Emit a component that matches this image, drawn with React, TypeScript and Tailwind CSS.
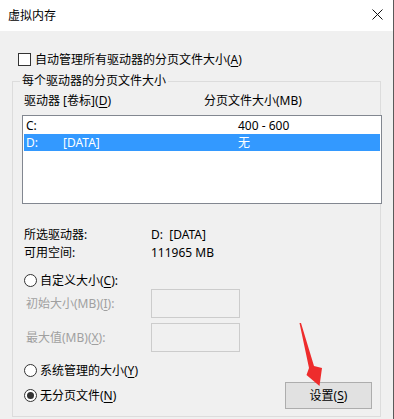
import React from 'react'

const U = ({ children }: { children: React.ReactNode }) => <span className="underline underline-offset-2">{children}</span>

const Radio = ({ checked }: { checked?: boolean }) => (
  <span className="w-[13px] h-[13px] rounded-full border border-[#333333] bg-white flex items-center justify-center shrink-0">
    {checked && <span className="w-[7px] h-[7px] rounded-full bg-[#333333]" />}
  </span>
)

const SizeInput = ({ label, mnemonic, mt }: { label: string; mnemonic: string; mt: string }) => (
  <div className={`flex items-center h-[29px] ${mt}`}>
    <span className="w-[129px] pl-[4px] text-[#a0a0a0]">
      {label}(<U>{mnemonic}</U>):
    </span>
    <div className="w-[89px] h-[29px] border border-[#cccccc] bg-[#f0f0f0]" />
  </div>
)

export default function App() {
  return (
    <div className="relative w-[394px] h-[419px] overflow-hidden bg-[#f0f0f0] border-r border-[#5a5a5a] text-[12px] leading-[17px] text-black font-['Noto_Sans','Noto_Sans_CJK_SC',sans-serif]">
      <div className="h-[31px] bg-white flex items-center justify-between pl-[8px] pr-[10px]">
        <span>虚拟内存</span>
        <svg width="11" height="11" viewBox="0 0 11 11" className="mt-[-2px]">
          <path d="M0.5 0.5L10.5 10.5M10.5 0.5L0.5 10.5" stroke="#111" strokeWidth="1" />
        </svg>
      </div>

      <div className="px-[12px]">
        <div className="flex items-center h-[14px] mt-[21px] pl-[6px] gap-[4px]">
          <span className="w-[13px] h-[13px] border border-[#333333] bg-white shrink-0" />
          <span>
            自动管理所有驱动器的分页文件大小(<U>A</U>)
          </span>
        </div>

        <fieldset className="mt-[7px] border border-[#dcdcdc] pl-[9px] pr-[8px] pt-[4px] pb-[7px]">
          <legend className="px-[2px] ml-[-2px] leading-[16px]">每个驱动器的分页文件大小</legend>

          <div className="flex pl-[2px] leading-[16px]">
            <span className="w-[180px]">
              驱动器 [卷标](<U>D</U>)
            </span>
            <span>分页文件大小(MB)</span>
          </div>

          <div className="mt-[6px] mr-[-10px] h-[89px] border border-[#828790] bg-white p-[1px]">
            <div className="flex items-center h-[17px] pl-[2px]">
              <span className="w-[37px]">C:</span>
              <span className="w-[175px]"></span>
              <span>400 - 600</span>
            </div>
            <div className="flex items-center h-[17px] pl-[2px] bg-[#3399ff] text-white">
              <span className="w-[37px]">D:</span>
              <span className="w-[175px]">[DATA]</span>
              <span>无</span>
            </div>
          </div>

          <div className="mt-[22px] pl-[2px] leading-[18px]">
            <div className="flex">
              <span className="w-[127px]">所选驱动器:</span>
              <span>D:&nbsp;&nbsp;[DATA]</span>
            </div>
            <div className="flex">
              <span className="w-[127px]">可用空间:</span>
              <span>111965 MB</span>
            </div>
          </div>

          <div className="flex items-center h-[17px] mt-[10px] pl-[2px] gap-[3px]">
            <Radio />
            <span>
              自定义大小(<U>C</U>):
            </span>
          </div>

          <SizeInput label="初始大小(MB)" mnemonic="I" mt="mt-0" />
          <SizeInput label="最大值(MB)" mnemonic="X" mt="mt-[5px]" />

          <div className="flex items-center h-[18px] mt-[9px] pl-[2px] gap-[3px]">
            <Radio />
            <span>
              系统管理的大小(<U>Y</U>)
            </span>
          </div>

          <div className="flex items-center justify-between h-[27px] mt-[3px] pl-[2px]">
            <div className="flex items-center gap-[3px]">
              <Radio checked />
              <span>
                无分页文件(<U>N</U>)
              </span>
            </div>
            <button className="w-[87px] h-[27px] border border-[#adadad] bg-[#e1e1e1] flex items-center justify-center">
              设置(<U>S</U>)
            </button>
          </div>
        </fieldset>
      </div>

      <svg className="absolute left-[296px] top-[318px]" width="32" height="72" viewBox="0 0 32 72">
        <polygon points="3.5,5 5,5 18,48 26,50 23.5,68 10.5,57 13,50" fill="#ee2c2c" />
      </svg>
    </div>
  )
}
